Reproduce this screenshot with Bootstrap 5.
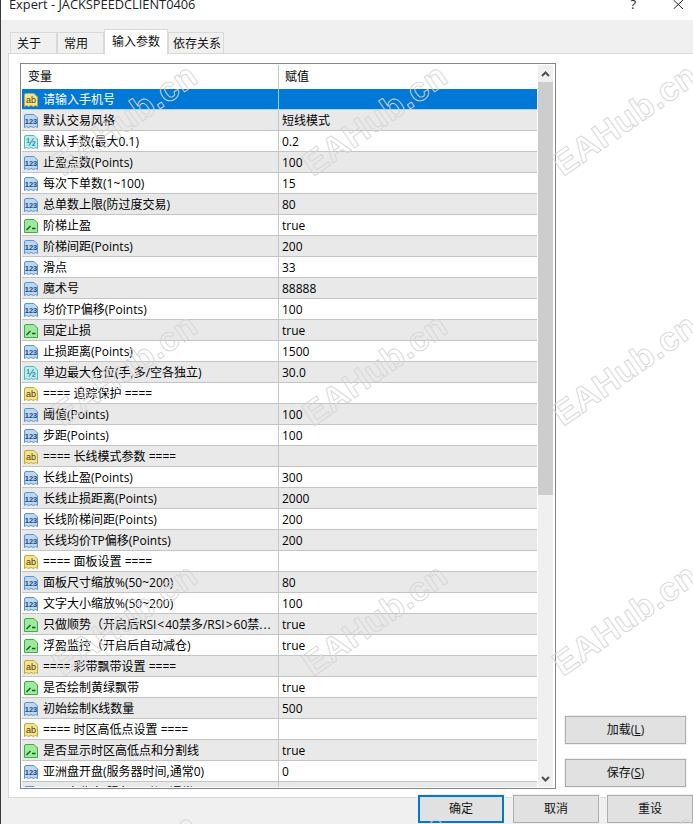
<!DOCTYPE html>
<html lang="zh-CN">
<head>
<meta charset="utf-8">
<title>Expert - JACKSPEEDCLIENT0406</title>
<link href="https://cdn.jsdelivr.net/npm/bootstrap@5.3.0/dist/css/bootstrap.min.css" rel="stylesheet">
<style>
html,body{height:100%;}
body{margin:0;background:#f0f0f0;overflow:hidden;color:#000;font:12px/16px "Open Sans","Noto Sans CJK SC",sans-serif;}
.win{position:relative;width:693px;height:824px;border-left:1px solid #3a3a3a;overflow:hidden;}
.titlebar{height:20px;background:#fff;padding-left:8px;line-height:9px;font-size:12.8px;color:#222;}
.title-q{margin-left:auto;margin-right:37px;font-size:13px;}
.title-x{margin-right:9px;width:11px;height:9px;}
.strip{height:33px;padding-left:9px;}
.strip .nav-tabs{border:0;height:33px;flex-wrap:nowrap;align-items:flex-end;}
.strip .nav-link{display:block;height:21px;margin:0;padding:3px 0 0 6px;border:1px solid #d9d9d9;border-bottom:0;border-radius:0;background:#f0f0f0;color:#111;font-size:12px;line-height:16px;white-space:nowrap;}
.tab-a{width:47px;}
.tab-b{width:47px;}
.tab-c{width:64px;}
.tab-d{width:56px;}
.strip .nav-link.active{height:25px;padding:4px 0 0 7px;background:#fff;color:#111;position:relative;z-index:2;margin-bottom:-1px;border-color:#d9d9d9;}
.strip .tab-d{padding-left:4px;}
.panel-main{margin-left:7px;height:745px;background:#fff;border:1px solid #d9d9d9;border-right:0;padding:9px 0 8px 11px;}
.plist{width:536px;height:726px;border:1px solid #82878f;padding:1px;background:#fff;}
.ptable{width:515px;overflow:hidden;}
.phead{height:24px;line-height:24px;flex:none;}
.phead .c1{padding-left:6px;}
.phead .c2{padding-left:6px;}
.c1{width:257px;flex:none;border-right:1px solid #c8c8c8;display:flex;white-space:nowrap;overflow:hidden;}
.c2{flex:1 1 auto;padding-left:3px;white-space:nowrap;}
.prow{height:21px;line-height:22px;background:#fff;border-bottom:1px solid #c4c4c4;flex:none;}
.prow:nth-child(even){background:#e9e9e9;}
.prow.sel{background:#0078d7;color:#fff;border-bottom-color:#b9cfe2;}
.prow.sel .c1{border-right-color:#a9c8e6;}
.prow .c1{padding-left:1px;height:20px;align-items:flex-start;}
.prow .c2{height:20px;overflow:hidden;}
.ico{width:16px;height:16px;margin:3px 4px 0 0;flex:none;}
.cmp{margin:0 1px;}
.dots{letter-spacing:1px;}
.sbar{width:15px;margin-left:1px;background:#f0f0f0;flex:none;}
.sarrow{height:17px;display:flex;align-items:center;justify-content:center;flex:none;}
.sthumb{height:413px;background:#cdcdcd;flex:none;}
.side{width:121px;margin-left:9px;gap:15px;padding-bottom:2px;}
.btn.wbtn{background:#e1e1e1;border:1px solid #adadad;border-radius:0;color:#111;font-size:12px;line-height:16px;padding:0;height:28px;box-shadow:0 0 0 1px #f0f0f0;}
.btn.wbtn.primary-w{border:2px solid #0078d7;margin-right:1px;}
.side .wbtn{width:121px;}
.foot{position:relative;z-index:3;margin-top:-3px;height:28px;gap:8px;justify-content:flex-end;}
.foot .wbtn{width:86px;}
.wm{position:absolute;left:0;top:0;width:693px;height:824px;pointer-events:none;z-index:5;}
.wm text{font-family:"Liberation Sans",sans-serif;font-size:34px;font-weight:700;letter-spacing:.6px;fill:none;stroke:#d6d6d6;stroke-width:.9;stroke-linejoin:round;}
</style>
</head>
<body>
<svg width="0" height="0" class="position-absolute">
<defs>
<symbol id="i-ab" viewBox="0 0 16 16"><path d="M1.5 3Q1.5 1.5 3 1.5H11L14.5 5V14.5L12.5 13.5 10.5 14.5 8 13.5 5.5 14.5 3.5 13.5 1.5 14.5Z" fill="#f4e48f" stroke="#c4a63c"/><text x="8" y="11" text-anchor="middle" font-size="9" font-family="Liberation Sans" fill="#4d3f10">ab</text></symbol>
<symbol id="i-123" viewBox="0 0 16 16"><path d="M1.5 3Q1.5 1.5 3 1.5H11L14.5 5V14.5L12.5 13.5 10.5 14.5 8 13.5 5.5 14.5 3.5 13.5 1.5 14.5Z" fill="#bcd7f2" stroke="#5b94d0"/><text x="8" y="11" text-anchor="middle" font-size="7.5" font-weight="700" font-family="Liberation Sans" fill="#1d4a7e">123</text></symbol>
<symbol id="i-v2" viewBox="0 0 16 16"><path d="M1.5 3Q1.5 1.5 3 1.5H11L14.5 5V14.5L12.5 13.5 10.5 14.5 8 13.5 5.5 14.5 3.5 13.5 1.5 14.5Z" fill="#b4eeec" stroke="#56b8c4"/><text x="8" y="11.5" text-anchor="middle" font-size="11" font-family="Liberation Sans" fill="#1f5f78">½</text></symbol>
<symbol id="i-bool" viewBox="0 0 16 16"><path d="M1.5 3Q1.5 1.5 3 1.5H11L14.5 5V14.5H1.5Z" fill="#9fe89f" stroke="#43ab43"/><path d="M3.5 12 7.5 8M9 10.5H12.5" fill="none" stroke="#0f5f1f" stroke-width="1.4"/></symbol>
</defs>
</svg>
<div class="win d-flex flex-column">
  <div class="titlebar d-flex">
    <span>Expert - JACKSPEEDCLIENT0406</span>
    <span class="title-q">?</span>
    <svg class="title-x" viewBox="0 0 11 9"><path d="M.5 0 10 9M10 0 .5 9" stroke="#222" fill="none"/></svg>
  </div>
  <div class="strip">
    <ul class="nav nav-tabs">
      <li class="nav-item"><a class="nav-link tab-a" href="#">关于</a></li>
      <li class="nav-item"><a class="nav-link tab-b" href="#">常用</a></li>
      <li class="nav-item"><a class="nav-link tab-c active" href="#">输入参数</a></li>
      <li class="nav-item"><a class="nav-link tab-d" href="#">依存关系</a></li>
    </ul>
  </div>
  <div class="panel-main d-flex">
    <div class="plist d-flex">
      <div class="ptable d-flex flex-column">
        <div class="phead d-flex"><div class="c1">变量</div><div class="c2">赋值</div></div>
        <div class="d-flex flex-column">
          <div class="prow sel d-flex"><div class="c1"><svg class="ico"><use href="#i-ab"/></svg>请输入手机号</div><div class="c2"></div></div>
          <div class="prow d-flex"><div class="c1"><svg class="ico"><use href="#i-123"/></svg>默认交易风格</div><div class="c2">短线模式</div></div>
          <div class="prow d-flex"><div class="c1"><svg class="ico"><use href="#i-v2"/></svg>默认手数(最大0.1)</div><div class="c2">0.2</div></div>
          <div class="prow d-flex"><div class="c1"><svg class="ico"><use href="#i-123"/></svg>止盈点数(Points)</div><div class="c2">100</div></div>
          <div class="prow d-flex"><div class="c1"><svg class="ico"><use href="#i-123"/></svg>每次下单数(1~100)</div><div class="c2">15</div></div>
          <div class="prow d-flex"><div class="c1"><svg class="ico"><use href="#i-123"/></svg>总单数上限(防过度交易)</div><div class="c2">80</div></div>
          <div class="prow d-flex"><div class="c1"><svg class="ico"><use href="#i-bool"/></svg>阶梯止盈</div><div class="c2">true</div></div>
          <div class="prow d-flex"><div class="c1"><svg class="ico"><use href="#i-123"/></svg>阶梯间距(Points)</div><div class="c2">200</div></div>
          <div class="prow d-flex"><div class="c1"><svg class="ico"><use href="#i-123"/></svg>滑点</div><div class="c2">33</div></div>
          <div class="prow d-flex"><div class="c1"><svg class="ico"><use href="#i-123"/></svg>魔术号</div><div class="c2">88888</div></div>
          <div class="prow d-flex"><div class="c1"><svg class="ico"><use href="#i-123"/></svg>均价TP偏移(Points)</div><div class="c2">100</div></div>
          <div class="prow d-flex"><div class="c1"><svg class="ico"><use href="#i-bool"/></svg>固定止损</div><div class="c2">true</div></div>
          <div class="prow d-flex"><div class="c1"><svg class="ico"><use href="#i-123"/></svg>止损距离(Points)</div><div class="c2">1500</div></div>
          <div class="prow d-flex"><div class="c1"><svg class="ico"><use href="#i-v2"/></svg>单边最大仓位(手,多/空各独立)</div><div class="c2">30.0</div></div>
          <div class="prow d-flex"><div class="c1"><svg class="ico"><use href="#i-ab"/></svg>==== 追踪保护 ====</div><div class="c2"></div></div>
          <div class="prow d-flex"><div class="c1"><svg class="ico"><use href="#i-123"/></svg>阈值(Points)</div><div class="c2">100</div></div>
          <div class="prow d-flex"><div class="c1"><svg class="ico"><use href="#i-123"/></svg>步距(Points)</div><div class="c2">100</div></div>
          <div class="prow d-flex"><div class="c1"><svg class="ico"><use href="#i-ab"/></svg>==== 长线模式参数 ====</div><div class="c2"></div></div>
          <div class="prow d-flex"><div class="c1"><svg class="ico"><use href="#i-123"/></svg>长线止盈(Points)</div><div class="c2">300</div></div>
          <div class="prow d-flex"><div class="c1"><svg class="ico"><use href="#i-123"/></svg>长线止损距离(Points)</div><div class="c2">2000</div></div>
          <div class="prow d-flex"><div class="c1"><svg class="ico"><use href="#i-123"/></svg>长线阶梯间距(Points)</div><div class="c2">200</div></div>
          <div class="prow d-flex"><div class="c1"><svg class="ico"><use href="#i-123"/></svg>长线均价TP偏移(Points)</div><div class="c2">200</div></div>
          <div class="prow d-flex"><div class="c1"><svg class="ico"><use href="#i-ab"/></svg>==== 面板设置 ====</div><div class="c2"></div></div>
          <div class="prow d-flex"><div class="c1"><svg class="ico"><use href="#i-123"/></svg>面板尺寸缩放%(50~200)</div><div class="c2">80</div></div>
          <div class="prow d-flex"><div class="c1"><svg class="ico"><use href="#i-123"/></svg>文字大小缩放%(50~200)</div><div class="c2">100</div></div>
          <div class="prow d-flex"><div class="c1"><svg class="ico"><use href="#i-bool"/></svg><span>只做顺势（开启后RSI<span class="cmp">&lt;</span>40禁多/RSI<span class="cmp">&gt;</span>60禁<span class="dots">...</span></span></div><div class="c2">true</div></div>
          <div class="prow d-flex"><div class="c1"><svg class="ico"><use href="#i-bool"/></svg>浮盈监控（开启后自动减仓)</div><div class="c2">true</div></div>
          <div class="prow d-flex"><div class="c1"><svg class="ico"><use href="#i-ab"/></svg>==== 彩带飘带设置 ====</div><div class="c2"></div></div>
          <div class="prow d-flex"><div class="c1"><svg class="ico"><use href="#i-bool"/></svg>是否绘制黄绿飘带</div><div class="c2">true</div></div>
          <div class="prow d-flex"><div class="c1"><svg class="ico"><use href="#i-123"/></svg>初始绘制K线数量</div><div class="c2">500</div></div>
          <div class="prow d-flex"><div class="c1"><svg class="ico"><use href="#i-ab"/></svg>==== 时区高低点设置 ====</div><div class="c2"></div></div>
          <div class="prow d-flex"><div class="c1"><svg class="ico"><use href="#i-bool"/></svg>是否显示时区高低点和分割线</div><div class="c2">true</div></div>
          <div class="prow d-flex"><div class="c1"><svg class="ico"><use href="#i-123"/></svg>亚洲盘开盘(服务器时间,通常0)</div><div class="c2">0</div></div>
          <div class="prow d-flex"><div class="c1"><svg class="ico"><use href="#i-123"/></svg>亚洲盘收盘(服务器时间,通常8)</div><div class="c2">8</div></div>
        </div>
      </div>
      <div class="sbar d-flex flex-column">
        <div class="sarrow"><svg width="9" height="6" viewBox="0 0 9 6"><path d="M1 5 4.5 1.5 8 5" fill="none" stroke="#505050" stroke-width="2"/></svg></div>
        <div class="sthumb"></div>
        <div class="flex-grow-1"></div>
        <div class="sarrow"><svg width="9" height="6" viewBox="0 0 9 6"><path d="M1 1 4.5 4.5 8 1" fill="none" stroke="#505050" stroke-width="2"/></svg></div>
      </div>
    </div>
    <div class="side d-flex flex-column justify-content-end">
      <button class="btn wbtn" type="button">加载(<u>L</u>)</button>
      <button class="btn wbtn" type="button">保存(<u>S</u>)</button>
    </div>
  </div>
  <div class="foot d-flex">
    <button class="btn wbtn primary-w" type="button">确定</button>
    <button class="btn wbtn" type="button">取消</button>
    <button class="btn wbtn" type="button">重设</button>
  </div>
  <svg class="wm" viewBox="0 0 693 824">
    <text transform="translate(62 177) rotate(-35)">EAHub.cn</text>
    <text transform="translate(312 177) rotate(-35)">EAHub.cn</text>
    <text transform="translate(562 177) rotate(-35)">EAHub.cn</text>
    <text transform="translate(62 427) rotate(-35)">EAHub.cn</text>
    <text transform="translate(312 427) rotate(-35)">EAHub.cn</text>
    <text transform="translate(562 427) rotate(-35)">EAHub.cn</text>
    <text transform="translate(62 677) rotate(-35)">EAHub.cn</text>
    <text transform="translate(312 677) rotate(-35)">EAHub.cn</text>
    <text transform="translate(562 677) rotate(-35)">EAHub.cn</text>
    <text transform="translate(62 927) rotate(-35)">EAHub.cn</text>
    <text transform="translate(312 927) rotate(-35)">EAHub.cn</text>
    <text transform="translate(562 927) rotate(-35)">EAHub.cn</text>
  </svg>
</div>
<script src="https://cdn.jsdelivr.net/npm/bootstrap@5.3.0/dist/js/bootstrap.bundle.min.js"></script>
</body>
</html>
